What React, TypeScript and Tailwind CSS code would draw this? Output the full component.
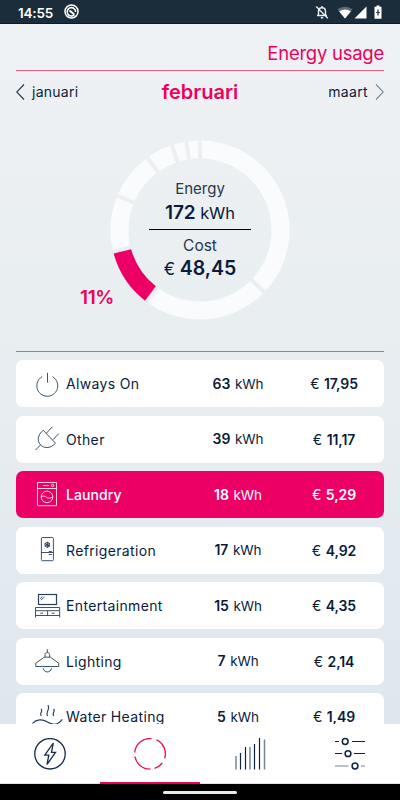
import React from 'react';

const GAP = 2;
const OUTER = 89.5;
const INNER = 71.5;
const boundaries = [0, 134.1, 216.6, 256, 292.6, 324.1, 341.8, 351.2, 360];

function point(radius: number, degrees: number) {
  const a = (degrees * Math.PI) / 180;
  return `${(90 + radius * Math.sin(a)).toFixed(2)} ${(90 - radius * Math.cos(a)).toFixed(2)}`;
}

function segment(from: number, to: number) {
  const o = (Math.asin(GAP / OUTER) * 180) / Math.PI;
  const i = (Math.asin(GAP / INNER) * 180) / Math.PI;
  return `M${point(OUTER, from + o)}A${OUTER} ${OUTER} 0 0 1 ${point(OUTER, to - o)}L${point(INNER, to - i)}A${INNER} ${INNER} 0 0 0 ${point(INNER, from + i)}Z`;
}

function Donut() {
  return (
    <svg className="col-start-1 row-start-1 size-[180px]" viewBox="0 0 180 180">
      {boundaries.slice(0, -1).map((from, n) => (
        <path key={from} d={segment(from, boundaries[n + 1])} fill={n === 2 ? '#ec0066' : '#f9fbfc'} />
      ))}
    </svg>
  );
}

const icons: Record<string, React.ReactNode> = {
  power: <path d="M15.500 4.800v9.800M10.200 8.600a10.500 10.500 0 1 0 10.200 0" />,
  plug: (
    <path d="M11.2 7.2 23.6 20.4M14.4 10.2l6-6.4M20.8 16.8l6-6.2M11.2 7.2c-5.8 5-6.2 10.800-2.800 14.500s9.600 4.400 15-1.300M8.600 21.800 3.500 27" />
  ),
  laundry: (
    <>
      <path d="M5.500 3.500h19v23.200h-19zM5.500 9.500h19M11 6.500h6" />
      <circle cx="20.500" cy="6.500" r="1.200" />
      <circle cx="15" cy="17.900" r="5.800" />
      <path d="M9.300 18c2-1.500 3.600-1 5.200.3s3.500 1.300 6.200-.3" />
    </>
  ),
  fridge: (
    <>
      <rect x="9.400" y="3.500" width="12" height="23.200" rx="1" />
      <path d="M9.300 18.500h12M16.800 17.500h3M16.800 20.500h3" />
      <path strokeWidth="1" d="M15.300 7.800v6M12.700 9.300l5.200 3M17.900 9.300l-5.200 3" />
      <circle cx="15.300" cy="10.800" r="2.400" />
    </>
  ),
  tv: (
    <>
      <rect x="6.500" y="4.500" width="18" height="10" strokeWidth="1.200" />
      <path d="m8.300 8.800 2.200-2.200M9 10.200l3.400-3.400M3.500 17.500h24.200v3.200H3.500zM3.500 20.700v6.800M27.700 20.700v6.800M3.500 25.500h24.200M15.600 20.700v4.800M8.300 23.200h2.800M19.800 23.200h2.800" />
    </>
  ),
  lamp: (
    <path d="M15.300 4.200v3.300M13 12.200V9.500c0-2.600 4.600-2.600 4.600 0v2.700M12.200 12.200h6.200l8.300 6v3.300H3.800v-3.300zM11.200 23.200c.8 5 7.500 5 8.300 0" />
  ),
  heating: (
    <path strokeWidth="1.150" d="M9.300 15c-2.200-3 2-4.300-.2-7.200M15.600 15c-2.500-4 3-6.500.3-11M21.800 15c-2.200-3 2-4.300-.2-7.200M.5 22.300c4-4.300 10-4.500 15-1.300s10.500 3.300 14.800-2.700M.5 27.300c4-4.300 10-4.500 15-1.300s10.500 3.300 14.800-2.700" />
  ),
};

const rows = [
  { icon: 'power', name: 'Always On', kwh: '63', cost: '17,95' },
  { icon: 'plug', name: 'Other', kwh: '39', cost: '11,17' },
  { icon: 'laundry', name: 'Laundry', kwh: '18', cost: '5,29', active: true },
  { icon: 'fridge', name: 'Refrigeration', kwh: '17', cost: '4,92' },
  { icon: 'tv', name: 'Entertainment', kwh: '15', cost: '4,35' },
  { icon: 'lamp', name: 'Lighting', kwh: '7', cost: '2,14' },
  { icon: 'heating', name: 'Water Heating', kwh: '5', cost: '1,49' },
];

function StatusBar() {
  return (
    <header className="flex h-6 shrink-0 items-center border-b border-[#0d1b29] bg-[#1b2d3b] pl-[18px] pr-[18px] text-white">
      <span className="pt-[3px] text-[13.500px] font-semibold leading-5 tracking-[-0.2px]">14:55</span>
      <svg className="ml-[11px] size-[15px]" viewBox="0 0 15 15" fill="none" stroke="white">
        <circle cx="7.500" cy="7.500" r="6.500" strokeWidth="1.500" />
        <path d="M10.600 10.600A4.200 4.200 0 1 1 11.600 8" strokeWidth="1.600" />
        <path d="m5.500 6.500 4.600 3.800" strokeWidth="2.100" />
      </svg>
      <div className="ml-auto flex items-center pt-px">
        <svg className="size-[14px]" viewBox="0 0 14 14" fill="none" stroke="#e9edef" strokeWidth="1.400">
          <path d="M3.500 10V6.500c0-5 7-5 7 0V10M2 10.500h10M7 1v2M5.800 12.700h2.400M1.200 1.500l11.600 11.700" />
        </svg>
        <svg className="ml-[8px] h-[13px] w-[16px]" viewBox="0 0 16 13">
          <path d="M.5 3.600C5-.2 11-.2 15.500 3.600L8 12.500z" fill="#5d6b76" />
          <path d="M2.200 5.500C5.500 2.700 10.500 2.700 13.800 5.500L8 12.500z" fill="white" />
        </svg>
        <svg className="ml-px h-[13px] w-[13px]" viewBox="0 0 13 13">
          <path d="M12.500.5v12H.5z" fill="white" />
        </svg>
        <svg className="ml-[7px] h-[14px] w-[8px]" viewBox="0 0 8 14">
          <path d="M2.500.5h3v1.300h2v12h-7v-12h2z" fill="white" />
          <path d="M4 4.500v6M2.200 7.500h3.600" stroke="#1b2d3b" strokeWidth="1.200" />
        </svg>
      </div>
    </header>
  );
}

function Row({ icon, name, kwh, cost, active }: { icon: string; name: string; kwh: string; cost: string; active?: boolean }) {
  return (
    <li
      className={
        active
          ? 'flex h-[47px] shrink-0 items-center rounded-[7px] bg-[#ec0066] pl-4 text-white'
          : 'flex h-[47px] shrink-0 items-center rounded-[7px] bg-white pl-4 text-[#0a1c3b]'
      }
    >
      <svg className="mb-[2px] h-[30px] w-[31px]" viewBox="0 0 31 30" fill="none" stroke={active ? '#ffe4ee' : '#27415c'} strokeWidth="0.900">
        {icons[icon]}
      </svg>
      <span
        className={
          active
            ? 'ml-[3px] w-[121px] whitespace-nowrap text-[14px] font-medium tracking-[0.1px]'
            : 'ml-[3px] w-[121px] whitespace-nowrap text-[14px] tracking-[0.35px]'
        }
      >
        {name}
      </span>
      <span className="w-[102px] text-center text-[13.500px] tracking-[-0.1px] [word-spacing:1px]">
        <b className="text-[14px] font-semibold">{kwh}</b> kWh
      </span>
      <span className="w-[90px] text-center text-[14px] tracking-[-0.1px] [word-spacing:0.800px]">
        € <b className="font-semibold">{cost}</b>
      </span>
    </li>
  );
}

function BottomNav() {
  return (
    <nav className="grid h-[60px] shrink-0 grid-cols-4 bg-white">
      <div className="flex justify-center border-b border-[#dfe1e4] pt-[14px]">
        <svg className="size-8" viewBox="0 0 32 32" fill="none" stroke="#152b46" strokeWidth="1.300">
          <circle cx="16" cy="15.800" r="15.200" />
          <path d="m19.300 5-8.500 12.200h4L13 26.500l8.500-12.200h-4z" />
        </svg>
      </div>
      <div className="flex justify-center border-b-[2px] border-[#ec0050] pt-[14px]">
        <svg className="size-8" viewBox="0 0 32 32" fill="none" stroke="#ec1459" strokeWidth="1.400">
          <path d="M22.500 1.900a15.300 15.300 0 0 1 8.200 18.500M28.300 25a15.300 15.300 0 0 1-7.800 5.400M16.500 31.100A15.300 15.300 0 0 1 .9 18.500M.7 14.500A15.300 15.300 0 0 1 17.500.6" />
        </svg>
      </div>
      <div className="flex justify-center border-b border-[#dfe1e4] pt-[13px]">
        <svg className="h-[33px] w-8" viewBox="0 0 32 33" fill="none" stroke="#10233d" strokeWidth="1.200">
          <path d="M6.500 16v16.500M11.500 10v22.500M20.500 7v25.500M25.500 1v31.500" />
          <path stroke="#758894" strokeWidth="1.500" d="M2 19v13.500M16 10v22.500M30.500 2.500v30" />
        </svg>
      </div>
      <div className="flex justify-center border-b border-[#dfe1e4] pt-[13px]">
        <svg className="h-[34px] w-8" viewBox="0 0 32 34" fill="none" stroke="#10233d" strokeWidth="1.200">
          <path d="M1 4.500h4M18 4.500h13M1 16.500h7M20 16.500h11" />
          <path stroke="#758498" d="M1 29h13.500M27 29h4" />
          <g strokeWidth="1.500"><circle cx="11.200" cy="4.500" r="2.900" /><circle cx="14" cy="16.700" r="2.900" /><circle cx="21" cy="29" r="2.900" /></g>
        </svg>
      </div>
    </nav>
  );
}

export default function App() {
  return (
    <div className="flex h-[800px] w-[400px] flex-col overflow-hidden bg-linear-to-b from-[#eff2f4] via-[#e7edf0] to-[#dde6ee] font-['Inter',sans-serif] text-[#0a1c3b]">
      <StatusBar />
      <div className="mx-4 flex h-[47px] shrink-0 items-end justify-end border-b border-[#ee6288] pb-1 text-[18.500px] leading-[26px] tracking-[-0.250px] text-[#ec0060]">
        Energy usage
      </div>
      <div className="mx-4 flex h-[42px] shrink-0 items-center text-[14px]">
        <svg className="h-4 w-[9px]" viewBox="0 0 9 16" fill="none" stroke="#23394f" strokeWidth="1.100">
          <path d="M8 .5.7 8 8 15.500" />
        </svg>
        <span className="-mt-px ml-[7px] w-[94px] tracking-[0.250px]">januari</span>
        <span className="w-[148px] text-center text-[20px] font-semibold text-[#ec0060]">februari</span>
        <span className="-mt-px w-[94px] text-right tracking-[0.350px]">maart</span>
        <svg className="ml-[7px] h-4 w-[9px]" viewBox="0 0 9 16" fill="none" stroke="#758c9d" strokeWidth="1.100">
          <path d="m1 .5 7.300 7.500L1 15.500" />
        </svg>
      </div>
      <div className="mx-4 flex h-[239px] shrink-0 items-start border-b border-[#71909c] pt-[26.500px]">
        <span className="mt-[144px] w-[94px] pl-[64px] text-[19px] font-semibold tracking-[-0.4px] text-[#ec0060]">11%</span>
        <div className="grid size-[180px] place-items-center">
          <Donut />
          <div className="col-start-1 row-start-1 w-[102px] pt-[2px] text-center">
            <div className="text-[15px] leading-5 text-[#243850]">Energy</div>
            <div className="h-[30px] text-[16.500px] leading-[27px] tracking-[-0.1px]"><b className="text-[19px] font-semibold">172</b> kWh</div>
            <div className="h-px bg-black" />
            <div className="pt-[6px] text-[15.500px] leading-5 text-[#243850]">Cost</div>
            <div className="whitespace-nowrap text-[17px] leading-[25px]">€ <b className="text-[19.500px] font-semibold">48,45</b></div>
          </div>
        </div>
      </div>
      <ul className="mx-4 flex min-h-0 flex-1 flex-col gap-[8.500px] overflow-hidden pt-2">
        {rows.map((row) => (
          <Row key={row.name} {...row} />
        ))}
      </ul>
      <BottomNav />
      <footer className="flex h-4 shrink-0 justify-center bg-black pt-[7px]">
        <div className="h-[3px] w-[74px] rounded-full bg-[#eee8eb]" />
      </footer>
    </div>
  );
}
